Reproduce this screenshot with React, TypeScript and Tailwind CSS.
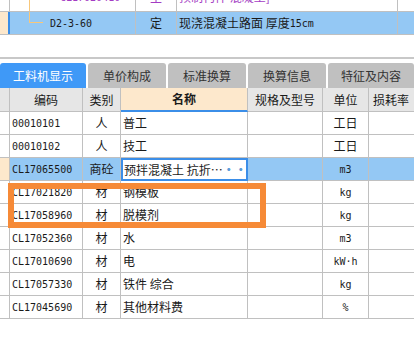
const cjk = "font-['Noto_Sans_CJK_SC',sans-serif]";
const mono = "font-['DejaVu_Sans_Mono','Noto_Sans_CJK_SC',monospace]";

type Row = { code: string; kind: string; name: string; unit: string; selected?: boolean };

const rows: Row[] = [
  { code: "00010101", kind: "人", name: "普工", unit: "工日" },
  { code: "00010102", kind: "人", name: "技工", unit: "工日" },
  { code: "CL17065500", kind: "商砼", name: "预拌混凝土 抗折…", unit: "m3", selected: true },
  { code: "CL17021820", kind: "材", name: "钢模板", unit: "kg" },
  { code: "CL17058960", kind: "材", name: "脱模剂", unit: "kg" },
  { code: "CL17052360", kind: "材", name: "水", unit: "m3" },
  { code: "CL17010690", kind: "材", name: "电", unit: "kW·h" },
  { code: "CL17057330", kind: "材", name: "铁件 综合", unit: "kg" },
  { code: "CL17045690", kind: "材", name: "其他材料费", unit: "%" },
];

const tabs = [
  { label: "工料机显示", w: "w-[86px]" },
  { label: "单价构成", w: "w-[78px]" },
  { label: "标准换算", w: "w-[78px]" },
  { label: "换算信息", w: "w-[78px]" },
  { label: "特征及内容", w: "w-[86px]" },
];

const cols = "grid grid-cols-[10px_73px_38px_127px_75px_46px_1fr]";
const cell = "h-[23px] border-r border-b border-[#c0c0c0] flex items-center overflow-hidden whitespace-nowrap";

export default function App() {
  return (
    <div className="w-[414px] h-[343px] bg-white overflow-hidden flex flex-col text-[#1a1a1a]">
      {/* upper grid (scrolled) */}
      <div className="h-[35px] flex flex-col overflow-hidden">
        <div className="h-[12px] grid grid-cols-[10px_126px_41px_221px_1fr] border-b border-[#c0c0c0] overflow-hidden">
          <div className="border-r border-[#c0c0c0]" />
          <div className="border-r border-[#c0c0c0] relative overflow-hidden">
            <div className="absolute left-[19px] top-0 h-[12px] w-px bg-[#f8c77a]" />
            <span className={`absolute left-[50px] -top-[10px] text-[10px] text-[#a43cc4] ${mono}`}>CL17020410</span>
          </div>
          <div className="border-r border-[#c0c0c0] relative overflow-hidden">
            <span className={`absolute left-[14px] -top-[12px] text-[12px] text-[#a43cc4] ${cjk}`}>主</span>
          </div>
          <div className="border-r border-[#c0c0c0] relative overflow-hidden">
            <span className={`absolute left-[2px] -top-[12px] text-[12px] text-[#a43cc4] whitespace-nowrap ${cjk}`}>预制构件 混凝土]</span>
          </div>
          <div />
        </div>
        <div className="h-[23px] grid grid-cols-[10px_126px_41px_221px_1fr] border-b border-[#c0c0c0] bg-[#94c8f4]">
          <div className="bg-[#fde8cc] border-r-[2px] border-[#3b8ee8]" />
          <div className="border-r border-[#c0c0c0] relative flex items-center">
            <div className="absolute left-[19px] top-0 h-[11px] w-px bg-[#f8c77a]" />
            <div className="absolute left-[19px] top-[10px] h-px w-[14px] bg-[#f8c77a]" />
            <span className={`ml-[40px] text-[10px] ${mono}`}>D2-3-60</span>
          </div>
          <div className={`border-r border-[#c0c0c0] flex items-center justify-center text-[12px] ${cjk}`}>定</div>
          <div className={`border-r border-[#c0c0c0] flex items-center pl-[2px] text-[12px] whitespace-nowrap ${cjk}`}>
            现浇混凝土路面 厚度<span className={`text-[10px] ${mono}`}>15cm</span>
          </div>
          <div />
        </div>
      </div>

      <div className="h-[22px]" />
      <div className="h-[2px] bg-[#c8c8c8]" />
      <div className="h-[4px]" />

      {/* tabs */}
      <div className={`h-[25px] flex gap-[2px] text-[12px] ${cjk}`}>
        {tabs.map((t, i) => (
          <div
            key={t.label}
            className={`${t.w} shrink-0 rounded-t-[3px] flex items-center justify-center ${
              i === 0 ? "bg-[#3f99f7] text-white" : "bg-[#c0c0c0] text-[#333]"
            }`}
          >
            {t.label}
          </div>
        ))}
      </div>

      {/* lower grid */}
      <div className="relative">
        <div className={`${cols} text-[12px] ${cjk}`}>
          <div className="h-[24px] bg-[#e6e6e6] border-r border-b border-[#c0c0c0]" />
          <div className="h-[24px] bg-[#e6e6e6] border-r border-b border-[#c0c0c0] flex items-center justify-center">编码</div>
          <div className="h-[24px] bg-[#e6e6e6] border-r border-b border-[#c0c0c0] flex items-center justify-center">类别</div>
          <div className="h-[24px] bg-[#fde8cc] border-r border-[#c0c0c0] border-b-[2px] border-b-[#3b8ee8] flex items-center justify-center font-bold">名称</div>
          <div className="h-[24px] bg-[#e6e6e6] border-r border-b border-[#c0c0c0] flex items-center justify-center">规格及型号</div>
          <div className="h-[24px] bg-[#e6e6e6] border-r border-b border-[#c0c0c0] flex items-center justify-center">单位</div>
          <div className="h-[24px] bg-[#e6e6e6] border-b border-[#c0c0c0] flex items-center pl-[4px] whitespace-nowrap overflow-hidden">损耗率</div>

          {rows.map((r, i) => {
            const bg = r.selected ? "bg-[#94c8f4]" : "bg-white";
            return (
              <div key={r.code} className="contents">
                <div className={`${cell} ${r.selected ? "bg-[#fde8cc]" : "bg-white"} text-[10px] ${mono}`}>
                  <span className="shrink-0 -ml-[6px]">{i + 1}</span>
                </div>
                <div className={`${cell} ${bg} pl-[2px] text-[10px] ${mono}`}>{r.code}</div>
                <div className={`${cell} ${bg} justify-center`}>{r.kind}</div>
                {r.selected ? (
                  <div className="h-[23px] border-[2px] border-[#3b8ee8] bg-white flex items-center pl-[1px] pr-[6px] whitespace-nowrap overflow-hidden">
                    <span className="flex-1">{r.name}</span>
                    <span className="text-[#5b9bd8] font-bold">···</span>
                  </div>
                ) : (
                  <div className={`${cell} ${bg} pl-[2px]`}>{r.name}</div>
                )}
                <div className={`${cell} ${bg}`} />
                <div className={`${cell} ${bg} justify-center ${r.unit === "工日" ? "" : `text-[10px] ${mono}`}`}>{r.unit}</div>
                <div className={`h-[23px] border-b border-[#c0c0c0] ${bg}`} />
              </div>
            );
          })}
        </div>
        <div className="absolute left-[8px] top-[95px] w-[258px] h-[45px] border-[6px] border-[#f68a37]" />
      </div>
    </div>
  );
}
